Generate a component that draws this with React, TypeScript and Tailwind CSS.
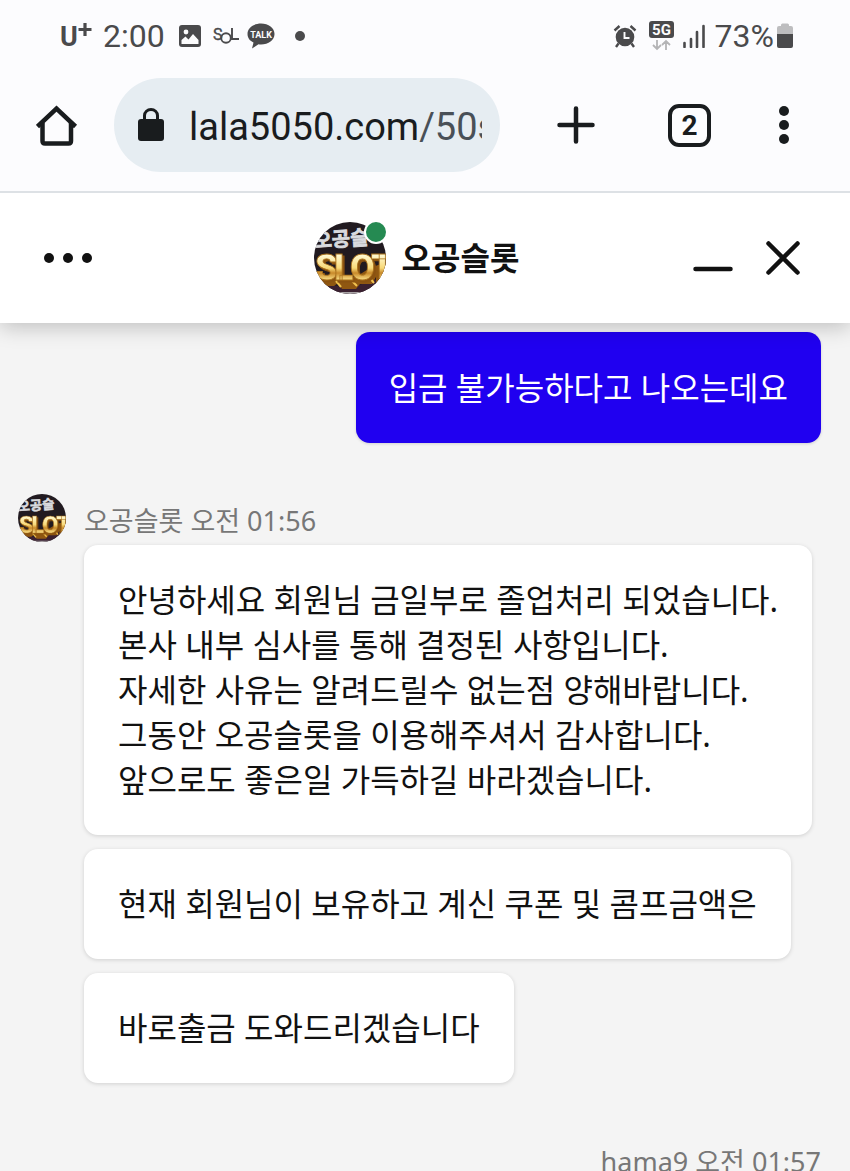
import React from 'react';

const messages = [
  [
    '안녕하세요 회원님 금일부로 졸업처리 되었습니다.',
    '본사 내부 심사를 통해 결정된 사항입니다.',
    '자세한 사유는 알려드릴수 없는점 양해바랍니다.',
    '그동안 오공슬롯을 이용해주셔서 감사합니다.',
    '앞으로도 좋은일 가득하길 바라겠습니다.',
  ],
  ['현재 회원님이 보유하고 계신 쿠폰 및 콤프금액은'],
  ['바로출금 도와드리겠습니다'],
];

const Avatar: React.FC<{ id: string; className: string }> = ({ id, className }) => (
  <svg viewBox="0 0 72 72" className={className} role="img" aria-label="오공슬롯">
    <defs>
      <clipPath id={`${id}-clip`}>
        <circle cx="36" cy="36" r="36" />
      </clipPath>
      <linearGradient id={`${id}-gold`} x1="0" y1="0" x2="0" y2="1">
        <stop offset="0.2" stopColor="#fff8cf" />
        <stop offset="0.5" stopColor="#f8d978" />
        <stop offset="0.62" stopColor="#c8892a" />
        <stop offset="0.8" stopColor="#ffe890" />
      </linearGradient>
    </defs>
    <g clipPath={`url(#${id}-clip)`}>
      <rect width="72" height="72" fill="#211a20" />
      <path d="M0 60 36 66 72 54V72H0Z" fill="#3a2030" />
      <path d="M20 70H54V72H20Z" fill="#a9a4a6" />
      <text
        x="0"
        y="26"
        fontFamily="'Noto Sans CJK KR', sans-serif"
        fontWeight="700"
        fontSize="20"
        fill="#d9dade"
        stroke="#d9dade"
        strokeWidth="0.8"
        transform="rotate(-4 0 26)"
      >
        오공슬
      </text>
      <path d="M3 57 8 64H20L24 61 28 67H42L46 62H58L62 55V62L68 60 72 50V40L56 46 40 56Z" fill="#8f5711" />
      <path d="M22 59 27 65M38 59 43 64M55 55 60 61" stroke="#f1c24f" strokeWidth="2" />
      <text
        x="1 20 36 57"
        y="58"
        fontFamily="Roboto, sans-serif"
        fontWeight="900"
        fontSize="36"
        fill={`url(#${id}-gold)`}
        stroke="#a8701c"
        strokeWidth="0.8"
        className="drop-shadow-[2px_2px_0_#8a5210]"
      >
        SLOT
      </text>
    </g>
  </svg>
);

const StatusBar: React.FC = () => (
  <div className="flex h-[72px] shrink-0 items-center pl-[59px] pr-14 font-['Roboto',sans-serif] text-[32px] leading-10 text-[#4a4a4c]">
    <svg viewBox="0 0 34 32" className="h-8 w-[34px]" role="img" aria-label="U+">
      <text x="1" y="26" fontSize="27" fontWeight="700" fontFamily="Roboto, sans-serif" fill="#4a4a4c">
        U
      </text>
      <path d="M26 3V16M19.5 9.5H32.5" stroke="#4a4a4c" strokeWidth="3.2" />
    </svg>
    <span className="ml-2.5">2:00</span>
    <svg viewBox="0 0 22 22" className="ml-3.5 h-[22px] w-[22px]" aria-hidden="true">
      <rect width="22" height="22" rx="3" fill="#4a4a4c" />
      <circle cx="7" cy="7" r="2.4" fill="#fcfcfd" />
      <path d="M2.5 19V15L6.5 11.5 9.5 14.5 14 9 19.5 15V19Z" fill="#fcfcfd" />
    </svg>
    <svg viewBox="0 0 28 22" className="ml-3 h-[22px] w-7" role="img" aria-label="SOL">
      <text x="0" y="15" fontSize="16" fontFamily="Roboto, sans-serif" fill="#4a4a4c" stroke="#4a4a4c" strokeWidth="0.4">
        S
      </text>
      <circle cx="13" cy="13" r="4.8" fill="none" stroke="#4a4a4c" strokeWidth="1.9" />
      <path d="M19 3V14H26" fill="none" stroke="#4a4a4c" strokeWidth="1.9" />
    </svg>
    <svg viewBox="0 0 28 26" className="ml-1.5 h-[26px] w-7" role="img" aria-label="TALK">
      <path d="M14 .5C6.5 .5.5 5 .5 11c0 4 2.5 7 6 8.5L5 25.5 11.5 21.3c.8.1 1.7.2 2.5.2 7.5 0 13.5-4.5 13.5-10.5S21.5.5 14 .5Z" fill="#4a4a4c" />
      <text x="14" y="14.5" textAnchor="middle" fontSize="9" fontWeight="700" fontFamily="Roboto, sans-serif" fill="#fcfcfd">
        TALK
      </text>
    </svg>
    <span className="ml-5 h-2.5 w-2.5 rounded-full bg-[#4a4a4c]" />

    <svg viewBox="0 0 24 24" className="ml-auto h-6 w-6" aria-hidden="true">
      <circle cx="12" cy="13" r="9.3" fill="#4a4a4c" />
      <path d="M1.5 6.5 6.5 2M22.5 6.5 17.5 2M5.5 19.5 3 23M18.5 19.5 21 23" stroke="#4a4a4c" strokeWidth="2.4" />
      <path d="M11.5 8V14H16.5" fill="none" stroke="#fcfcfd" strokeWidth="1.9" />
    </svg>
    <svg viewBox="0 0 26 30" className="ml-3 h-[30px] w-[26px]" role="img" aria-label="5G">
      <rect width="25" height="17" rx="3" fill="#4a4a4c" />
      <text x="12.5" y="14" textAnchor="middle" fontSize="15" fontWeight="700" fontFamily="Roboto, sans-serif" fill="#fcfcfd">
        5G
      </text>
      <path d="M8 19V28M4 24 8 28 12 24M17 29V20M13 24 17 20 21 24" fill="none" stroke="#b4b4b6" strokeWidth="1.8" />
    </svg>
    <svg viewBox="0 0 24 24" className="ml-2 h-6 w-6" aria-hidden="true">
      <path d="M1.5 19V23M8 15V23M14 8V23M20.5 2V23" stroke="#4a4a4c" strokeWidth="2.6" strokeLinecap="round" />
    </svg>
    <span className="ml-2">73%</span>
    <svg viewBox="0 0 18 26" className="ml-0.5 h-[26px] w-[18px]" aria-hidden="true">
      <path d="M5 3V2Q5 .5 6.5 .5H11.5Q13 .5 13 2V3H15Q17 3 17 5V12H1V5Q1 3 3 3Z" fill="#bdbdbf" />
      <path d="M1 11H17V23Q17 25 15 25H3Q1 25 1 23Z" fill="#4a4a4c" />
    </svg>
  </div>
);

const BrowserBar: React.FC = () => (
  <div className="relative z-20 flex shrink-0 items-center border-b-2 border-[#dde1e5] bg-[#fcfcfe] pb-[19px] pl-9 pr-[61px] pt-1.5 text-[#191c1e]">
    <button type="button" aria-label="Home">
      <svg viewBox="0 0 42 42" className="h-[42px] w-[42px]" fill="none" stroke="currentColor" strokeWidth="4.5" strokeLinejoin="round">
        <path d="M1.5 22.5 20.5 4.5 39.5 22.5" strokeLinejoin="miter" />
        <path d="M6.5 19V37Q6.5 39.5 9 39.5H32.5Q35 39.5 35 37V19" />
      </svg>
    </button>
    <div className="ml-9 flex h-[94px] min-w-0 flex-1 items-center rounded-full bg-[#e6edf2] pl-6 pr-[18px]">
      <svg viewBox="0 0 26 34" className="h-[34px] w-[26px] shrink-0" aria-hidden="true">
        <rect y="11" width="26" height="22" rx="3" fill="currentColor" />
        <path d="M6.5 13V7.5a6.5 6 0 0 1 13 0V13" fill="none" stroke="currentColor" strokeWidth="3" />
      </svg>
      <a href="#" className="ml-[25px] flex-1 overflow-hidden whitespace-nowrap pt-1 font-['Roboto',sans-serif] text-[38px] leading-[48px]">
        lala5050.com<span className="text-[#495057]">/50s</span>
      </a>
    </div>
    <button type="button" aria-label="New tab" className="ml-[57px]">
      <svg viewBox="0 0 38 38" className="h-[38px] w-[38px]" stroke="currentColor" strokeWidth="4.5" strokeLinecap="round">
        <path d="M19 2.5V35.5M2.5 19H35.5" />
      </svg>
    </button>
    <button
      type="button"
      aria-label="Tabs"
      className="ml-[73px] flex h-[43px] w-[43px] items-center justify-center rounded-[11px] border-4 border-current pt-0.5 font-['Roboto',sans-serif] text-[28px] font-bold leading-8"
    >
      2
    </button>
    <button type="button" aria-label="More" className="ml-[68px] flex flex-col gap-1">
      <span className="h-2.5 w-2.5 rounded-full bg-current" />
      <span className="h-2.5 w-2.5 rounded-full bg-current" />
      <span className="h-2.5 w-2.5 rounded-full bg-current" />
    </button>
  </div>
);

const ChatHeader: React.FC = () => (
  <header className="relative z-10 flex h-[130px] shrink-0 items-center bg-white text-[#111] shadow-[0_4px_20px_rgba(0,0,0,0.22)]">
    <div className="w-[140px] pl-11">
      <button type="button" aria-label="Menu" className="flex gap-[9px] py-4">
        <span className="h-2.5 w-2.5 rounded-full bg-current" />
        <span className="h-2.5 w-2.5 rounded-full bg-current" />
        <span className="h-2.5 w-2.5 rounded-full bg-current" />
      </button>
    </div>
    <div className="flex flex-1 items-center justify-center gap-4">
      <div className="relative">
        <Avatar id="header" className="h-[72px] w-[72px]" />
        <span className="absolute -right-0.5 -top-0.5 h-6 w-6 rounded-full border-2 border-white bg-[#258a52]" />
      </div>
      <h1 className="pb-0.5 text-[32px] font-bold leading-[45px]">오공슬롯</h1>
    </div>
    <div className="flex w-[157px] items-center justify-between pr-[50px]">
      <button type="button" aria-label="Minimize">
        <svg viewBox="0 0 40 36" className="h-9 w-10" stroke="currentColor" strokeWidth="4.5" strokeLinecap="round">
          <path d="M2.5 29H37.5" />
        </svg>
      </button>
      <button type="button" aria-label="Close">
        <svg viewBox="0 0 34 34" className="h-[34px] w-[34px]" stroke="currentColor" strokeWidth="4.5" strokeLinecap="round">
          <path d="M2.5 2.5 31.5 31.5M31.5 2.5 2.5 31.5" />
        </svg>
      </button>
    </div>
  </header>
);

const App: React.FC = () => {
  return (
    <div className="flex h-screen flex-col overflow-hidden bg-[#fcfcfe] font-['Noto_Sans','Noto_Sans_CJK_KR',sans-serif]">
      <StatusBar />
      <BrowserBar />
      <ChatHeader />

      <main className="min-h-0 flex-1 overflow-hidden bg-[#f4f4f4] pl-[18px] pr-[29px] pt-[9px] text-[32px] leading-[45px] text-[#111]">
        <div className="ml-auto w-fit rounded-[14px] bg-[#2000f0] px-[33px] py-[33px] text-white shadow-[0_1px_3px_rgba(0,0,0,0.15)]">
          입금 불가능하다고 나오는데요
        </div>

        <div className="mt-[51px] flex items-start gap-[18px]">
          <Avatar id="message" className="h-12 w-12 shrink-0" />
          <div>
            <div className="h-[51px] text-[27px] leading-[54px] text-[#777]">오공슬롯 오전 01:56</div>
            <div className="flex flex-col items-start gap-3.5">
              {messages.map((lines, index) => (
                <div
                  key={index}
                  className="rounded-[14px] bg-white px-[34px] pb-[33px] pt-8 shadow-[0_1px_4px_rgba(0,0,0,0.15)]"
                >
                  {lines.map((line) => (
                    <p key={line}>{line}</p>
                  ))}
                </div>
              ))}
            </div>
          </div>
        </div>

        <div className="mt-[59px] text-right text-[27px] leading-10 text-[#777]">hama9 오전 01:57</div>
      </main>
    </div>
  );
};

export default App;
